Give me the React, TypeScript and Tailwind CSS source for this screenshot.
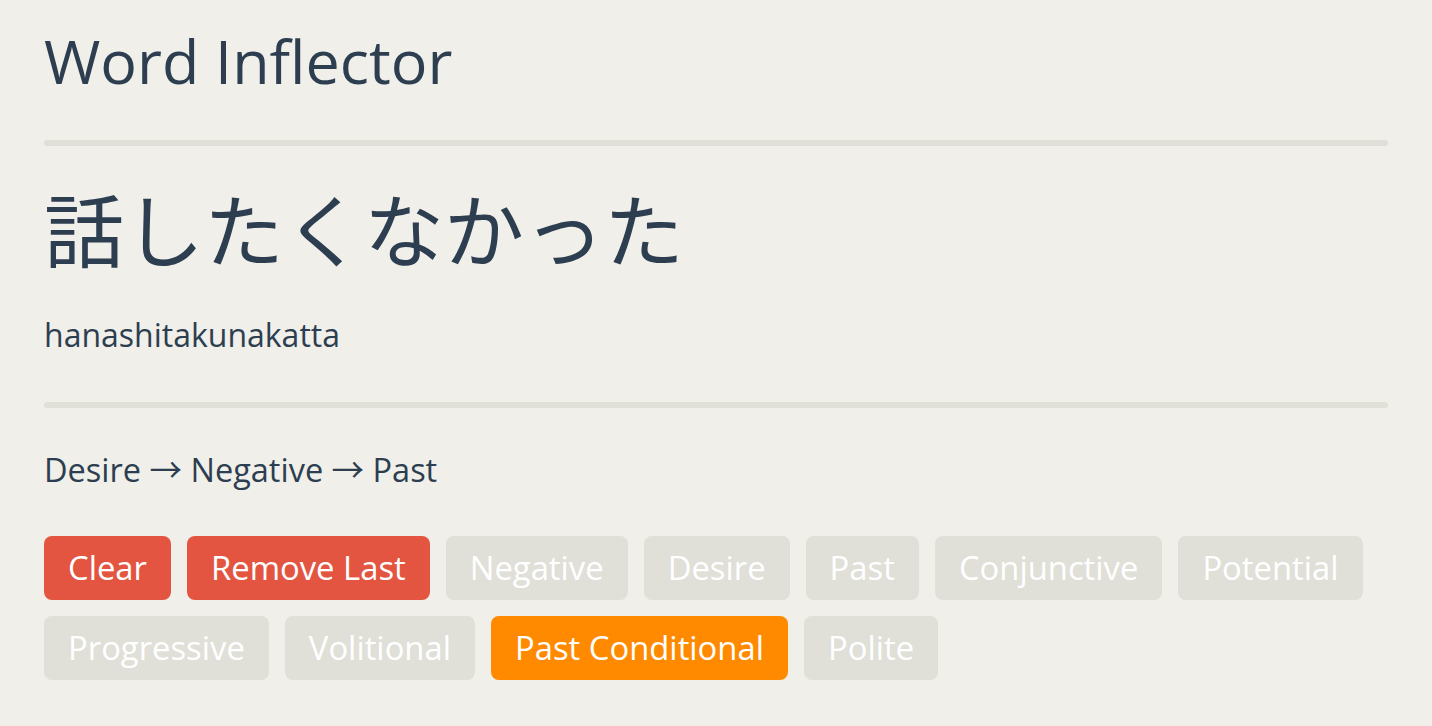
const steps = ["Desire", "Negative", "Past"];

type Kind = "danger" | "idle" | "active";

const buttons: { label: string; kind: Kind }[] = [
  { label: "Clear", kind: "danger" },
  { label: "Remove Last", kind: "danger" },
  { label: "Negative", kind: "idle" },
  { label: "Desire", kind: "idle" },
  { label: "Past", kind: "idle" },
  { label: "Conjunctive", kind: "idle" },
  { label: "Potential", kind: "idle" },
  { label: "Progressive", kind: "idle" },
  { label: "Volitional", kind: "idle" },
  { label: "Past Conditional", kind: "active" },
  { label: "Polite", kind: "idle" },
];

const kindClass: Record<Kind, string> = {
  danger: "bg-[#e35541]",
  idle: "bg-[#e0dfd8]",
  active: "bg-[#ff8a00]",
};

export default function App() {
  return (
    <div className="min-h-[726px] bg-[#f0efe9] px-[44px] text-[#2c3e50] [font-family:'Open_Sans','Noto_Sans_CJK_JP',sans-serif]">
      <h1 className="pt-[21px] text-[61px] leading-[80px]">Word Inflector</h1>
      <hr className="mt-[39px] h-[6px] rounded-full border-0 bg-[#e0dfd8]" />
      <div className="mt-[32px] text-[80px] leading-[96px] [font-family:'Noto_Sans_CJK_JP',sans-serif]">
        話したくなかった
      </div>
      <div className="mt-[41px] text-[32px] leading-[40px]">hanashitakunakatta</div>
      <hr className="mt-[47px] h-[6px] rounded-full border-0 bg-[#e0dfd8]" />
      <div className="mt-[42px] text-[32.5px] leading-[40px]">{steps.join(" → ")}</div>
      <div className="mt-[46px] flex flex-wrap gap-4">
        {buttons.map((b) => (
          <button
            key={b.label}
            className={`h-16 rounded-lg px-6 text-[32.8px] text-white ${kindClass[b.kind]}`}
          >
            {b.label}
          </button>
        ))}
      </div>
    </div>
  );
}
